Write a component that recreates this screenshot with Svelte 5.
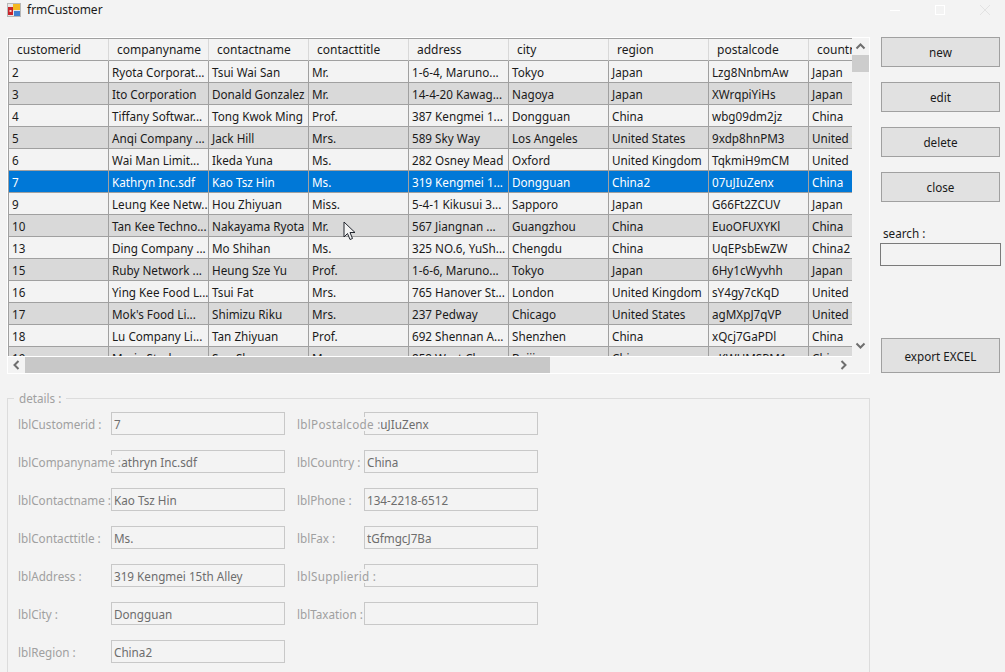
<script>
  const columns = ['customerid', 'companyname', 'contactname', 'contacttitle', 'address', 'city', 'region', 'postalcode', 'country']

  const rows = [
    ['2', 'Ryota Corporat...', 'Tsui Wai San', 'Mr.', '1-6-4, Maruno...', 'Tokyo', 'Japan', 'Lzg8NnbmAw', 'Japan'],
    ['3', 'Ito Corporation', 'Donald Gonzalez', 'Mr.', '14-4-20 Kawag...', 'Nagoya', 'Japan', 'XWrqpiYiHs', 'Japan'],
    ['4', 'Tiffany Softwar...', 'Tong Kwok Ming', 'Prof.', '387 Kengmei 1...', 'Dongguan', 'China', 'wbg09dm2jz', 'China'],
    ['5', 'Anqi Company ...', 'Jack Hill', 'Mrs.', '589 Sky Way', 'Los Angeles', 'United States', '9xdp8hnPM3', 'United States'],
    ['6', 'Wai Man Limit...', 'Ikeda Yuna', 'Ms.', '282 Osney Mead', 'Oxford', 'United Kingdom', 'TqkmiH9mCM', 'United Kingdom'],
    ['7', 'Kathryn Inc.sdf', 'Kao Tsz Hin', 'Ms.', '319 Kengmei 1...', 'Dongguan', 'China2', '07uJIuZenx', 'China'],
    ['9', 'Leung Kee Netw...', 'Hou Zhiyuan', 'Miss.', '5-4-1 Kikusui 3...', 'Sapporo', 'Japan', 'G66Ft2ZCUV', 'Japan'],
    ['10', 'Tan Kee Techno...', 'Nakayama Ryota', 'Mr.', '567 Jiangnan ...', 'Guangzhou', 'China', 'EuoOFUXYKl', 'China'],
    ['13', 'Ding Company ...', 'Mo Shihan', 'Ms.', '325 NO.6, YuSh...', 'Chengdu', 'China', 'UqEPsbEwZW', 'China2'],
    ['15', 'Ruby Network ...', 'Heung Sze Yu', 'Prof.', '1-6-6, Maruno...', 'Tokyo', 'Japan', '6Hy1cWyvhh', 'Japan'],
    ['16', 'Ying Kee Food L...', 'Tsui Fat', 'Mrs.', '765 Hanover St...', 'London', 'United Kingdom', 'sY4gy7cKqD', 'United Kingdom'],
    ['17', "Mok's Food Li...", 'Shimizu Riku', 'Mrs.', '237 Pedway', 'Chicago', 'United States', 'agMXpJ7qVP', 'United States'],
    ['18', 'Lu Company Li...', 'Tan Zhiyuan', 'Prof.', '692 Shennan A...', 'Shenzhen', 'China', 'xQcj7GaPDl', 'China'],
    ['19', 'Maria Stark', 'Sun Shu', 'Mrs.', '858 West Ch', 'Beijing', 'China', 'eKWUMSPM1', 'China']
  ]

  const selected = '7'

  const leftFields = [
    ['lblCustomerid :', '7'],
    ['lblCompanyname :', 'Kathryn Inc.sdf'],
    ['lblContactname :', 'Kao Tsz Hin'],
    ['lblContacttitle :', 'Ms.'],
    ['lblAddress :', '319 Kengmei 15th Alley'],
    ['lblCity :', 'Dongguan'],
    ['lblRegion :', 'China2']
  ]

  const rightFields = [
    ['lblPostalcode :', '07uJIuZenx'],
    ['lblCountry :', 'China'],
    ['lblPhone :', '134-2218-6512'],
    ['lblFax :', 'tGfmgcJ7Ba'],
    ['lblSupplierid :', '7'],
    ['lblTaxation :', '']
  ]

  // these two run wider in the original font
  const wideLabels = ['lblPostalcode :', 'lblSupplierid :']
</script>

<div class="window">
  <header class="titlebar">
    <svg class="app-icon" width="14" height="14" viewBox="0 0 14 14">
      <rect x="0.5" y="0.5" width="13" height="13" fill="#e8e8e8" stroke="#b8b8b8" />
      <rect x="1" y="4" width="5" height="8" fill="#c8242b" />
      <rect x="2.5" y="7" width="2" height="2" fill="#f3d0c0" />
      <rect x="6" y="1" width="7" height="6" fill="#f4b820" />
      <rect x="7" y="8" width="6" height="5" fill="#3f7fd0" />
    </svg>
    <span class="title">frmCustomer</span>
    <div class="controls">
      <svg width="10" height="10" viewBox="0 0 10 10"><path d="M0 5.5h10" stroke="#fff" /></svg>
      <svg width="10" height="10" viewBox="0 0 10 10"><rect x="0.5" y="0.5" width="9" height="9" fill="none" stroke="#fff" /></svg>
      <svg width="10" height="10" viewBox="0 0 10 10"><path d="M0 0l10 10M10 0L0 10" stroke="#e2e2e2" /></svg>
    </div>
  </header>

  <div class="top">
    <div class="grid-frame">
      <div class="grid-body">
        <div class="grid-clip">
          <table>
            <thead>
              <tr>
                {#each columns as col}
                  <th>{col}</th>
                {/each}
              </tr>
            </thead>
            <tbody>
              {#each rows as row, i}
                <tr class:alt={i % 2 === 1} class:selected={row[0] === selected}>
                  {#each row as cell}
                    <td>{cell}</td>
                  {/each}
                </tr>
              {/each}
            </tbody>
          </table>
        </div>
        <div class="vscroll">
          <svg width="17" height="17" viewBox="0 0 17 17"><path d="M4.5 10.5l4-4 4 4" fill="none" stroke="#6e6e6e" stroke-width="2" /></svg>
          <div class="vthumb"></div>
          <svg class="down" width="17" height="17" viewBox="0 0 17 17"><path d="M4.5 6.5l4 4 4-4" fill="none" stroke="#6e6e6e" stroke-width="2" /></svg>
        </div>
      </div>
      <div class="hscroll">
        <svg width="17" height="16" viewBox="0 0 17 16"><path d="M10.5 4l-4 4 4 4" fill="none" stroke="#6e6e6e" stroke-width="2" /></svg>
        <div class="hthumb"></div>
        <svg class="right" width="17" height="16" viewBox="0 0 17 16"><path d="M6.5 4l4 4-4 4" fill="none" stroke="#6e6e6e" stroke-width="2" /></svg>
      </div>
    </div>

    <aside class="side">
      <button class="btn">new</button>
      <button class="btn">edit</button>
      <button class="btn">delete</button>
      <button class="btn">close</button>
      <label class="search">
        <span>search :</span>
        <input type="text" />
      </label>
      <button class="btn export">export EXCEL</button>
    </aside>
  </div>

  <fieldset class="details">
    <legend>details :</legend>
    <div class="form-col">
      {#each leftFields as [label, value]}
        <div class="field">
          <span class="lbl">{label}</span>
          <input type="text" {value} disabled />
        </div>
      {/each}
    </div>
    <div class="form-col second">
      {#each rightFields as [label, value]}
        <div class="field">
          <span class="lbl" class:wide={wideLabels.includes(label)}>{label}</span>
          <input type="text" {value} disabled />
        </div>
      {/each}
    </div>
  </fieldset>

  <svg class="cursor" width="14" height="20" viewBox="0 0 14 20">
    <path d="M1 1v15l3.5-3.5 2.5 6 2.5-1-2.5-6h5z" fill="#f3f3f3" stroke="#22262e" />
  </svg>
</div>

<style>
  :global(body) {
    background: #f3f3f3;
  }

  .window {
    width: 1005px;
    height: 672px;
    overflow: hidden;
    background: #f3f3f3;
    font-family: "Noto Sans", "Open Sans", sans-serif;
    font-size: 11.7px;
    color: #1a1a1a;
  }

  .titlebar {
    display: flex;
    align-items: center;
    height: 19px;
    padding-left: 7px;
    margin-bottom: 18px;
  }
  .app-icon { flex-shrink: 0; }
  .title { margin-left: 6px; font-size: 12px; }
  .controls {
    margin-left: auto;
    display: flex;
    gap: 35px;
    margin-right: 15px;
    align-items: center;
  }

  .top {
    display: flex;
    align-items: flex-start;
    padding-left: 7px;
  }

  .grid-frame {
    width: 863px;
    height: 337px;
    box-sizing: border-box;
    border: 1px solid #fff;
    display: flex;
    flex-direction: column;
  }
  .grid-body { display: flex; height: 318px; }
  .grid-clip {
    width: 844px;
    height: 318px;
    overflow: hidden;
    flex-shrink: 0;
  }

  table {
    border-collapse: separate;
    border-spacing: 0;
    table-layout: fixed;
    width: 900px;
    border-top: 1px solid #a0a0a0;
    border-left: 1px solid #a0a0a0;
  }
  th, td {
    box-sizing: border-box;
    width: 100px;
    height: 22px;
    padding: 0 3px;
    white-space: nowrap;
    overflow: hidden;
    font-weight: 400;
    text-align: left;
    border-right: 1px solid #a0a0a0;
    border-bottom: 1px solid #a0a0a0;
  }
  th {
    padding-left: 8px;
    border-right-color: #d8d8d8;
    font-size: 12px;
  }
  tr.alt td { background: #d9d9d9; }
  tr.selected td { background: #0078d7; color: #fff; }

  .vscroll {
    width: 17px;
    display: flex;
    flex-direction: column;
    align-items: center;
    height: 318px;
  }
  .vthumb { width: 100%; height: 17px; background: #cdcdcd; }
  .vscroll .down { margin-top: auto; margin-bottom: 2px; }

  .hscroll {
    display: flex;
    align-items: center;
    height: 16px;
    border-top: 1px solid #fff;
    width: 844px;
  }
  .hthumb { width: 525px; height: 16px; background: #c8c8c8; }
  .hscroll .right { margin-left: auto; }

  .side {
    margin-left: 10px;
    width: 121px;
    display: flex;
    flex-direction: column;
    align-items: flex-start;
  }
  .btn {
    width: 119px;
    height: 30px;
    margin: 0 0 15px 1px;
    box-sizing: border-box;
    background: #e1e1e1;
    border: 1px solid #a0a0a0;
    border-radius: 0;
    font: inherit;
    color: #1a1a1a;
    padding: 0;
  }
  .search {
    display: flex;
    flex-direction: column;
    width: 100%;
    margin-top: 7px;
  }
  .search span { padding-left: 3px; height: 19px; line-height: 19px; }
  .search input {
    box-sizing: border-box;
    width: 121px;
    height: 23px;
    background: #f3f3f3;
    border: 1px solid #7a7a7a;
    padding: 0;
  }
  .export { height: 35px; margin-top: 72px; margin-bottom: 0; }

  .details {
    box-sizing: border-box;
    width: 863px;
    height: 300px;
    margin: 17px 0 0 7px;
    padding: 0 0 0 10px;
    border: 1px solid #dcdcdc;
    display: flex;
    gap: 12px;
    color: #a0a0a0;
  }
  legend {
    margin-left: -4px;
    padding: 0 5px;
    line-height: 14px;
    color: #a0a0a0;
  }
  .form-col {
    display: flex;
    flex-direction: column;
    gap: 15px;
    padding-top: 7px;
  }
  .field {
    display: grid;
    grid-template-columns: 93px 174px;
    align-items: center;
    height: 23px;
  }
  .second .field { grid-template-columns: 67px 174px; }
  .lbl {
    grid-column: 1;
    grid-row: 1;
    justify-self: start;
    white-space: nowrap;
    background: #f3f3f3;
    line-height: 14px;
    height: 14px;
    position: relative;
    z-index: 1;
  }
  .lbl.wide { letter-spacing: 0.28px; }
  .field input {
    grid-column: 2;
    grid-row: 1;
    box-sizing: border-box;
    width: 174px;
    height: 23px;
    margin: 0;
    background: #f3f3f3;
    border: 1px solid #c8c8c8;
    padding: 0 2px;
    font: inherit;
    color: #6d6d6d;
    opacity: 1;
    -webkit-text-fill-color: #6d6d6d;
  }

  .cursor {
    position: absolute;
    left: 343px;
    top: 221px;
    z-index: 5;
  }
</style>
